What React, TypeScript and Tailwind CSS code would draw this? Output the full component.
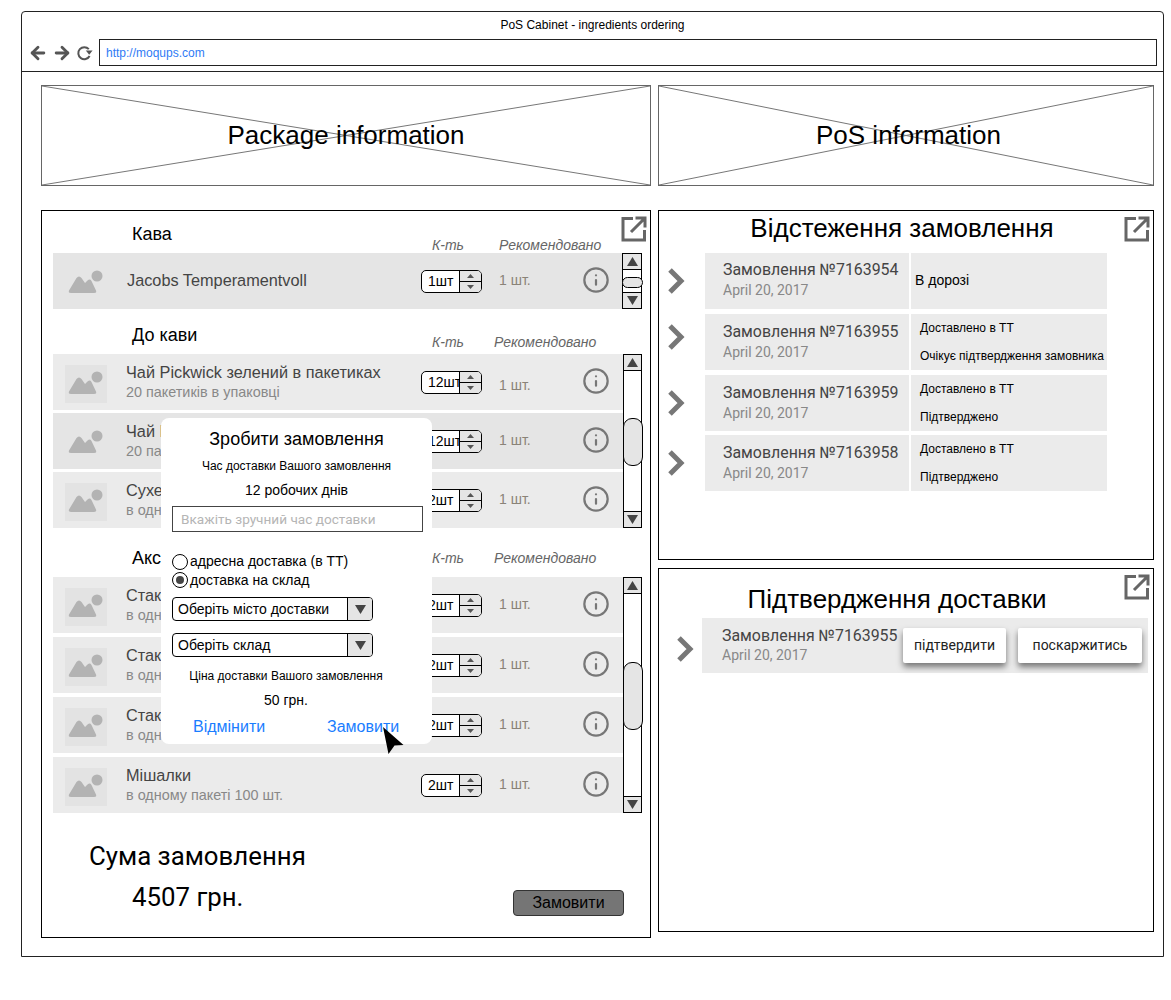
import React from 'react';
import { ArrowLeft, ArrowRight, Info } from 'lucide-react';

type Item = { title: string; sub?: string; qty: string; dark?: boolean; recClass?: string };

const coffee: Item[] = [{ title: 'Jacobs Temperamentvoll', qty: '1шт', dark: true }];
const extras: Item[] = [
  { title: 'Чай Pickwick зелений в пакетиках', sub: '20 пакетиків в упаковці', qty: '12шт', recClass: 'mt-[22px]' },
  { title: 'Чай Pickwick чорний в пакетиках', sub: '20 пакетиків в упаковці', qty: '12шт', dark: true },
  { title: 'Сухе молоко', sub: 'в одному пакеті 100 шт.', qty: '2шт' },
];
const accessories: Item[] = [
  { title: 'Стаканчики 110 мл', sub: 'в одному пакеті 100 шт.', qty: '2шт' },
  { title: 'Стаканчики 175 мл', sub: 'в одному пакеті 100 шт.', qty: '2шт' },
  { title: 'Стаканчики 250 мл', sub: 'в одному пакеті 100 шт.', qty: '2шт' },
  { title: 'Мішалки', sub: 'в одному пакеті 100 шт.', qty: '2шт' },
];

const orders = [
  { id: '7163954', status: ['В дорозі'], chevron: 'mt-[15px]', gap: 'mb-[5px]', pad: 'pt-[7px]' },
  { id: '7163955', status: ['Доставлено в ТТ', 'Очікує підтвердження замовника'], chevron: 'mt-[10px]', gap: 'mb-[5px]', pad: 'pt-[8px]' },
  { id: '7163959', status: ['Доставлено в ТТ', 'Підтверджено'], chevron: 'mt-[15px]', gap: 'mb-[4px]', pad: 'pt-[8px]' },
  { id: '7163958', status: ['Доставлено в ТТ', 'Підтверджено'], chevron: 'mt-[15px]', gap: '', pad: 'pt-[8px]' },
];

function ExpandIcon() {
  return (
    <svg width="26" height="26" viewBox="0 0 26 26" fill="none" stroke="#666" strokeWidth="3" className="absolute top-[5px] right-[3px]">
      <path d="M12 2.5H2V24H23.5V14" />
      <path d="M10 16L23 3M14.5 2H24V11.5" />
    </svg>
  );
}

function Chevron({ className }: { className?: string }) {
  return (
    <svg width="18" height="26" viewBox="0 0 18 26" fill="none" stroke="#777" strokeWidth="5" className={className}>
      <path d="M3 2L14 13L3 24" />
    </svg>
  );
}

function ImageIcon() {
  return (
    <svg width="42" height="38" viewBox="0 0 42 38" fill="#b3b3b3">
      <circle cx="32" cy="12" r="5.5" />
      <path d="M4 26.5L11.5 14Q14 11 16.5 14L20 19L22.5 16.5Q25 14.5 26.5 17L31 26.5Q32 29 29 29H6Q3 29 4 26.5Z" />
    </svg>
  );
}

function Triangle({ down }: { down?: boolean }) {
  return (
    <svg width="11" height="9" viewBox="0 0 11 9" fill="#444">
      <path d={down ? 'M0 0H11L5.5 9Z' : 'M0 9H11L5.5 0Z'} />
    </svg>
  );
}

function Spinner({ value }: { value: string }) {
  return (
    <div className="flex h-[23px] w-[61px] overflow-hidden rounded-[5px] border border-black bg-white font-['Liberation_Sans',sans-serif] text-[14px] text-black">
      <div className="flex w-[38px] items-center overflow-hidden border-r border-black pl-[6px] leading-[21px]">{value}</div>
      <div className="flex flex-1 flex-col bg-[#e5e5e5]">
        <div className="flex flex-1 items-center justify-center border-b border-black">
          <svg width="7" height="4" viewBox="0 0 7 4" fill="#555"><path d="M0 4H7L3.5 0Z" /></svg>
        </div>
        <div className="flex flex-1 items-center justify-center">
          <svg width="7" height="4" viewBox="0 0 7 4" fill="#555"><path d="M0 0H7L3.5 4Z" /></svg>
        </div>
      </div>
    </div>
  );
}

function ScrollBar({ thumb, track }: { thumb: string; track?: string }) {
  return (
    <div className={`relative flex flex-col border border-black bg-white ${track ?? 'w-[19px]'}`}>
      <div className="flex h-[16px] shrink-0 items-center justify-center border-b border-black bg-[#e5e5e5]"><Triangle /></div>
      <div className="flex-1" />
      <div className="flex h-[16px] shrink-0 items-center justify-center border-t border-black bg-[#e5e5e5]"><Triangle down /></div>
      <div className={`absolute left-[-1px] right-[-2px] rounded-[9px] border border-black bg-[#e5e5e5] ${thumb}`} />
    </div>
  );
}

function Row({ item }: { item: Item }) {
  return (
    <div className={`flex h-[56px] w-[570px] shrink-0 items-start ${item.dark ? 'bg-[#e5e5e5]' : 'bg-[#ebebeb]'}`}>
      <div className="w-[73px] shrink-0 pl-[12px] pt-[11px]">
        <div className={`h-[38px] w-[42px] ${item.dark ? '' : 'bg-[#e3e3e3]'}`}>
          <ImageIcon />
        </div>
      </div>
      <div className={`w-[295px] shrink-0 overflow-hidden whitespace-nowrap ${item.sub ? 'pt-[9px]' : 'pl-[1px] pt-[18px]'}`}>
        <div className="text-[16.3px] leading-[19px] text-[#444]">{item.title}</div>
        {item.sub && <div className="mt-[1px] text-[14.4px] leading-[19px] text-[#888]">{item.sub}</div>}
      </div>
      <div className="mt-[17px] w-[61px] shrink-0"><Spinner value={item.qty} /></div>
      <div className={`${item.recClass ?? 'mt-[18px]'} ml-[17px] w-[83px] shrink-0 text-[14px] leading-[18px] text-[#8a8378]`}>1 шт.</div>
      <Info size={28} strokeWidth={1.9} className="mt-[13px] text-[#777]" />
    </div>
  );
}

function SectionHead({ title, box, titlePad, labelPad, cols }: { title: string; box: string; titlePad: string; labelPad: string; cols: string }) {
  return (
    <div className={`grid ${cols} ${box} font-['Liberation_Sans',sans-serif]`}>
      <div className={`pl-[79px] text-[18px] leading-[22px] text-black ${titlePad}`}>{title}</div>
      <div className={`text-[14px] italic leading-[18px] text-[#666] ${labelPad}`}>К-ть</div>
      <div className={`whitespace-nowrap text-[14px] italic leading-[18px] text-[#666] ${labelPad}`}>Рекомендовано</div>
    </div>
  );
}

function Placeholder({ label, box }: { label: string; box: string }) {
  return (
    <div className={`relative flex h-[101px] shrink-0 items-center justify-center border border-[#666] ${box}`}>
      <svg className="absolute inset-0 h-full w-full" preserveAspectRatio="none" viewBox="0 0 100 100" fill="none" stroke="#777">
        <path d="M0 0L100 100M100 0L0 100" vectorEffect="non-scaling-stroke" />
      </svg>
      <span className="relative text-[26px] text-black">{label}</span>
    </div>
  );
}

function OrderDialog() {
  return (
    <div className="absolute left-[119px] top-[207px] h-[326px] w-[271px] rounded-[8px] bg-white px-[11px] text-black">
      <div className="pt-[10px] text-center text-[18px] leading-[22px]">Зробити замовлення</div>
      <div className="mt-[9px] text-center text-[12px] leading-[14px]">Час доставки Вашого замовлення</div>
      <div className="mt-[8px] text-center text-[14px] leading-[18px]">12 робочих днів</div>
      <div className="mt-[7px] h-[26px] w-[251px] border border-[#444] pl-[8px] font-['Roboto',sans-serif] text-[13.6px] leading-[24px] text-[#b5b5b5]">Вкажіть зручний час доставки</div>
      <div className="mt-[20px] flex h-[19px] items-center gap-[2px] text-[14px]">
        <span className="h-[16px] w-[16px] rounded-full border border-black" />
        адресна доставка (в ТТ)
      </div>
      <div className="flex h-[18px] items-center gap-[2px] text-[14px]">
        <span className="flex h-[16px] w-[16px] items-center justify-center rounded-full border border-black">
          <span className="h-[8px] w-[8px] rounded-full bg-[#444]" />
        </span>
        доставка на склад
      </div>
      <div className="mt-[8px] flex h-[24px] w-[201px] overflow-hidden rounded-[4px] border border-black text-[14px] leading-[22px]">
        <div className="w-[175px] border-r border-black pl-[5px]">Оберіть місто доставки</div>
        <div className="flex flex-1 items-center justify-center bg-[#e5e5e5]"><Triangle down /></div>
      </div>
      <div className="mt-[12px] flex h-[24px] w-[201px] overflow-hidden rounded-[4px] border border-black text-[14px] leading-[22px]">
        <div className="w-[175px] border-r border-black pl-[5px]">Оберіть склад</div>
        <div className="flex flex-1 items-center justify-center bg-[#e5e5e5]"><Triangle down /></div>
      </div>
      <div className="mt-[12px] pr-[21px] text-center text-[12px] leading-[14px]">Ціна доставки Вашого замовлення</div>
      <div className="mt-[8px] pr-[21px] text-center text-[14px] leading-[18px]">50 грн.</div>
      <div className="mt-[8px] flex pl-[21px] text-[16px] leading-[20px] text-[#1a7dff]">
        <span className="w-[134px]">Відмінити</span>
        <span>Замовити</span>
      </div>
    </div>
  );
}

export default function App() {
  return (
    <div className="min-h-[1000px] bg-white pl-[21px] pt-[11px] font-['Roboto',sans-serif]">
      <div className="relative h-[946px] w-[1143px] rounded-t-[4px] border border-[#222] font-['Liberation_Sans',sans-serif]">
        {/* Browser chrome */}
        <div className="h-[60px] border-b border-[#222]">
          <div className="pt-[6px] text-center text-[12px] leading-[14px] text-black">PoS Cabinet - ingredients ordering</div>
          <div className="mt-[7px] flex items-center pl-[6px]">
            <ArrowLeft size={20} strokeWidth={3.4} className="text-[#555]" />
            <ArrowRight size={20} strokeWidth={3.4} className="ml-[4px] text-[#555]" />
            <svg width="17" height="16" viewBox="0 0 17 16" fill="none" className="ml-[4px]">
              <path d="M12.8 4.2A6 6 0 1 0 13.6 11" stroke="#555" strokeWidth="2" />
              <path d="M9.8 5.5H16.6L13.2 9.8Z" fill="#555" />
            </svg>
            <div className="ml-[6px] h-[27px] w-[1058px] border border-[#222] pl-[6px] text-[12px] leading-[26px] text-[#2f7bf5]">http://moqups.com</div>
          </div>
        </div>

        <div className="pl-[19px] pt-[13px]">
          <div className="flex gap-[7px]">
            <Placeholder label="Package information" box="w-[610px]" />
            <Placeholder label="PoS information" box="w-[496px] pl-[5px]" />
          </div>

          <div className="mt-[24px] flex gap-[7px]">
            {/* Ingredients */}
            <div className="relative h-[728px] w-[610px] shrink-0 border border-black pl-[11px]">
              <ExpandIcon />
              <SectionHead title="Кава" box="h-[42px]" titlePad="pt-[12px]" labelPad="pt-[25px]" cols="grid-cols-[379px_67px_1fr]" />
              <div className="flex w-[589px]">
                {coffee.map((item) => <Row key={item.title} item={item} />)}
                <ScrollBar thumb="top-[23px] h-[11px]" track="ml-[-1px] w-[20px]" />
              </div>

              <SectionHead title="До кави" box="h-[45px]" titlePad="pt-[15px]" labelPad="pt-[24px]" cols="grid-cols-[379px_62px_1fr]" />
              <div className="flex w-[589px]">
                <div className="flex flex-col gap-[3px]">
                  {extras.map((item) => <Row key={item.title} item={item} />)}
                </div>
                <ScrollBar thumb="top-[63px] h-[48px]" />
              </div>

              <SectionHead title="Аксесуари" box="h-[49px]" titlePad="pt-[19px]" labelPad="pt-[21px]" cols="grid-cols-[379px_62px_1fr]" />
              <div className="flex w-[589px]">
                <div className="flex flex-col gap-[4px]">
                  {accessories.map((item) => <Row key={item.title} item={item} />)}
                </div>
                <ScrollBar thumb="top-[84px] h-[68px]" />
              </div>

              <div className="flex">
                <div className="w-[460px] pl-[36px] pt-[27px] font-['Roboto',sans-serif] text-black">
                  <div className="whitespace-nowrap text-[25.8px] leading-[32px]">Сума замовлення</div>
                  <div className="ml-[43px] mt-[8px] text-[25.8px] leading-[34px]">4507 грн.</div>
                </div>
                <div className="mt-[77px] h-[26px] w-[111px] rounded-[4px] border border-[#333] bg-[#757575] text-center text-[16px] leading-[24px] text-black">Замовити</div>
              </div>

              <OrderDialog />
              <svg width="24" height="30" viewBox="0 0 24 30" fill="#000" className="absolute left-[340px] top-[515px]">
                <path d="M1 1L21.5 19L12.5 19.5L6.5 28L1 1Z" />
              </svg>
            </div>

            <div className="flex w-[496px] shrink-0 flex-col gap-[8px]">
              {/* Order tracking */}
              <div className="relative h-[350px] border border-black">
                <ExpandIcon />
                <div className="h-[42px] pr-[8px] pt-[1px] text-center text-[26px] leading-[32px] text-black">Відстеження замовлення</div>
                <div className="flex flex-col">
                  {orders.map((order) => (
                    <div key={order.id} className={`flex h-[56px] ${order.gap}`}>
                      <div className="w-[46px] pl-[8px]"><Chevron className={order.chevron} /></div>
                      <div className={`h-full w-[204px] bg-[#ebebeb] pl-[18px] font-['Roboto',sans-serif] ${order.pad}`}>
                        <div className="text-[15.9px] leading-[20px] text-[#444]">Замовлення №{order.id}</div>
                        <div className="text-[14px] leading-[20px] text-[#888]">April 20, 2017</div>
                      </div>
                      <div className="ml-[2px] h-full w-[196px] bg-[#ebebeb] text-black">
                        {order.status.length === 1 ? (
                          <div className="pl-[4px] pt-[18px] text-[14px] leading-[18px]">{order.status[0]}</div>
                        ) : (
                          <div className="flex flex-col gap-[14px] whitespace-nowrap pl-[9px] pt-[7px] text-[12px] leading-[14px]">
                            {order.status.map((s) => <div key={s}>{s}</div>)}
                          </div>
                        )}
                      </div>
                    </div>
                  ))}
                </div>
              </div>

              {/* Delivery confirmation */}
              <div className="relative h-[364px] border border-black">
                <ExpandIcon />
                <div className="h-[49px] pr-[18px] pt-[14px] text-center text-[26px] leading-[32px] text-black">Підтвердження доставки</div>
                <div className="flex h-[55px]">
                  <div className="w-[43px] pl-[17px]"><Chevron className="mt-[18px]" /></div>
                  <div className="flex h-full w-[446px] bg-[#ebebeb]">
                    <div className="w-[201px] pl-[20px] pt-[8px] font-['Roboto',sans-serif]">
                      <div className="text-[15.9px] leading-[20px] text-[#444]">Замовлення №7163955</div>
                      <div className="text-[14px] leading-[18px] text-[#888]">April 20, 2017</div>
                    </div>
                    <div className="mt-[10px] h-[35px] w-[103px] rounded-[2px] bg-white text-center font-['Roboto',sans-serif] text-[14px] leading-[35px] text-[#222] shadow-[0_4px_6px_rgba(0,0,0,0.5)]">підтвердити</div>
                    <div className="ml-[12px] mt-[10px] h-[35px] w-[124px] rounded-[2px] bg-white text-center font-['Roboto',sans-serif] text-[14px] leading-[35px] text-[#222] shadow-[0_4px_6px_rgba(0,0,0,0.5)]">поскаржитись</div>
                  </div>
                </div>
              </div>
            </div>
          </div>
        </div>
      </div>
    </div>
  );
}
